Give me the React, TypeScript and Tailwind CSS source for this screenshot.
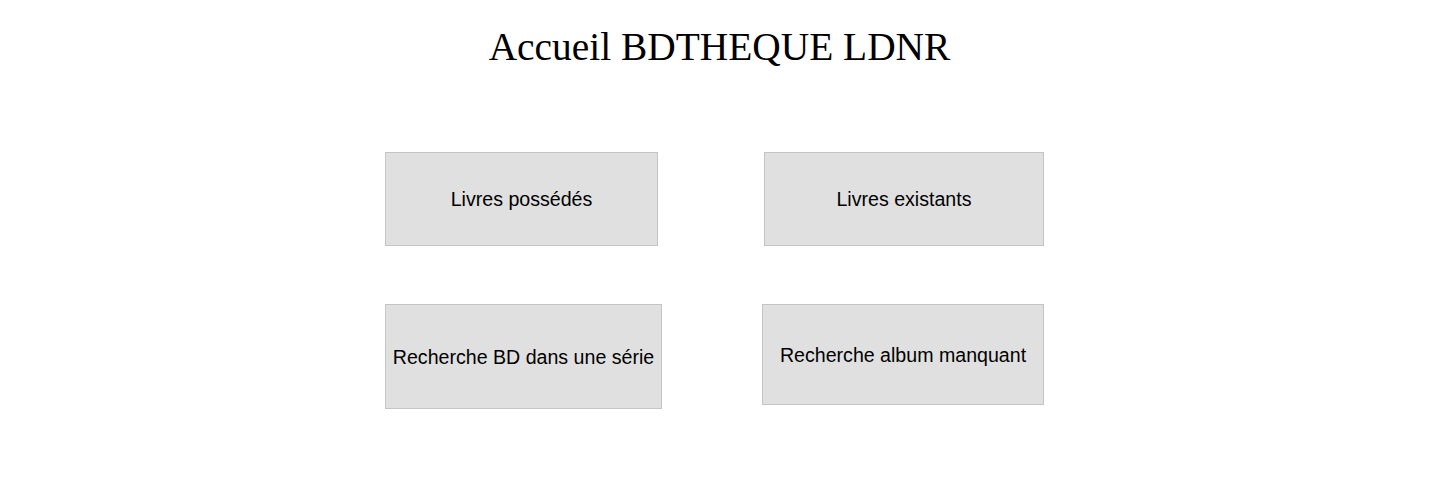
import React from "react";

const btn =
  "flex items-center justify-center pt-[2px] bg-[#e0e0e0] border border-[#c4c4c4] text-[19.6px] text-black font-['Liberation_Sans',Arial,sans-serif]";

export default function App() {
  return (
    <div className="min-h-[494px] bg-white">
      <h1 className="pt-[22px] pl-[6px] text-center text-[39.4px] leading-[50px] text-black font-['Liberation_Serif','Times_New_Roman',serif]">
        Accueil BDTHEQUE LDNR
      </h1>
      <div className="mt-[80px] flex flex-col gap-[58px] pl-[385px]">
        <div className="flex items-start gap-[106px]">
          <button className={`${btn} w-[273px] h-[94px]`}>Livres possédés</button>
          <button className={`${btn} w-[280px] h-[94px]`}>Livres existants</button>
        </div>
        <div className="flex items-start gap-[100px]">
          <button className={`${btn} w-[277px] h-[105px]`}>Recherche BD dans une série</button>
          <button className={`${btn} w-[282px] h-[101px]`}>Recherche album manquant</button>
        </div>
      </div>
    </div>
  );
}
